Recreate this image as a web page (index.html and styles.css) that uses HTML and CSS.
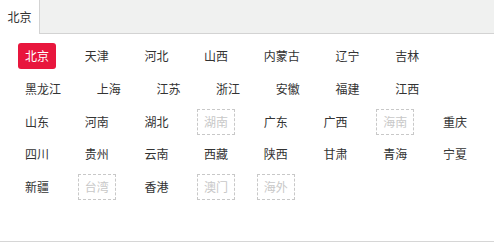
FILE: index.html
```html
<!DOCTYPE html>
<html lang="zh">
<head>
<meta charset="utf-8">
<link rel="stylesheet" href="styles.css">
</head>
<body>
<div class="panel">
  <div class="tabs">
    <div class="tab">北京</div>
  </div>
  <div class="list">
    <span class="item active">北京</span>
    <span class="item">天津</span>
    <span class="item">河北</span>
    <span class="item">山西</span>
    <span class="item">内蒙古</span>
    <span class="item">辽宁</span>
    <span class="item">吉林</span>
    <span class="item">黑龙江</span>
    <span class="item">上海</span>
    <span class="item">江苏</span>
    <span class="item">浙江</span>
    <span class="item">安徽</span>
    <span class="item">福建</span>
    <span class="item">江西</span>
    <span class="item">山东</span>
    <span class="item">河南</span>
    <span class="item">湖北</span>
    <span class="item disabled">湖南</span>
    <span class="item">广东</span>
    <span class="item">广西</span>
    <span class="item disabled">海南</span>
    <span class="item">重庆</span>
    <span class="item">四川</span>
    <span class="item">贵州</span>
    <span class="item">云南</span>
    <span class="item">西藏</span>
    <span class="item">陕西</span>
    <span class="item">甘肃</span>
    <span class="item">青海</span>
    <span class="item">宁夏</span>
    <span class="item">新疆</span>
    <span class="item disabled">台湾</span>
    <span class="item">香港</span>
    <span class="item disabled">澳门</span>
    <span class="item disabled">海外</span>
  </div>
</div>
</body>
</html>
```
FILE: styles.css
```css
html, body {
  margin: 0;
  padding: 0;
  background: #fff;
}
body {
  font-family: "Microsoft YaHei", "Noto Sans CJK SC", "Noto Sans", sans-serif;
  font-size: 12px;
  color: #333;
}
.panel {
  width: 494px;
  height: 241px;
  border-bottom: 1px solid #d6d6d6;
  background: #fff;
}
.tabs {
  display: flex;
  height: 33px;
  background: #f0f1f0;
  border-bottom: 1px solid #d3d3d3;
}
.tab {
  width: 39px;
  height: 34px;
  background: #fff;
  border-right: 1px solid #d3d3d3;
  text-align: center;
  line-height: 34px;
  color: #333;
}
.list {
  display: flex;
  flex-wrap: wrap;
  width: 464px;
  gap: 6.75px 21.7px;
  padding: 9px 0 0 18px;
}
.item {
  box-sizing: border-box;
  height: 26px;
  line-height: 26px;
  padding: 0 7px;
  text-align: center;
  white-space: nowrap;
  color: #333;
}
.item.active {
  background: #e8163d;
  color: #fff;
  border-radius: 3px;
}
.item.disabled {
  border: 1px dashed #c8c8c8;
  color: #c8c8c8;
  line-height: 24px;
  padding: 0 6px;
}
```
